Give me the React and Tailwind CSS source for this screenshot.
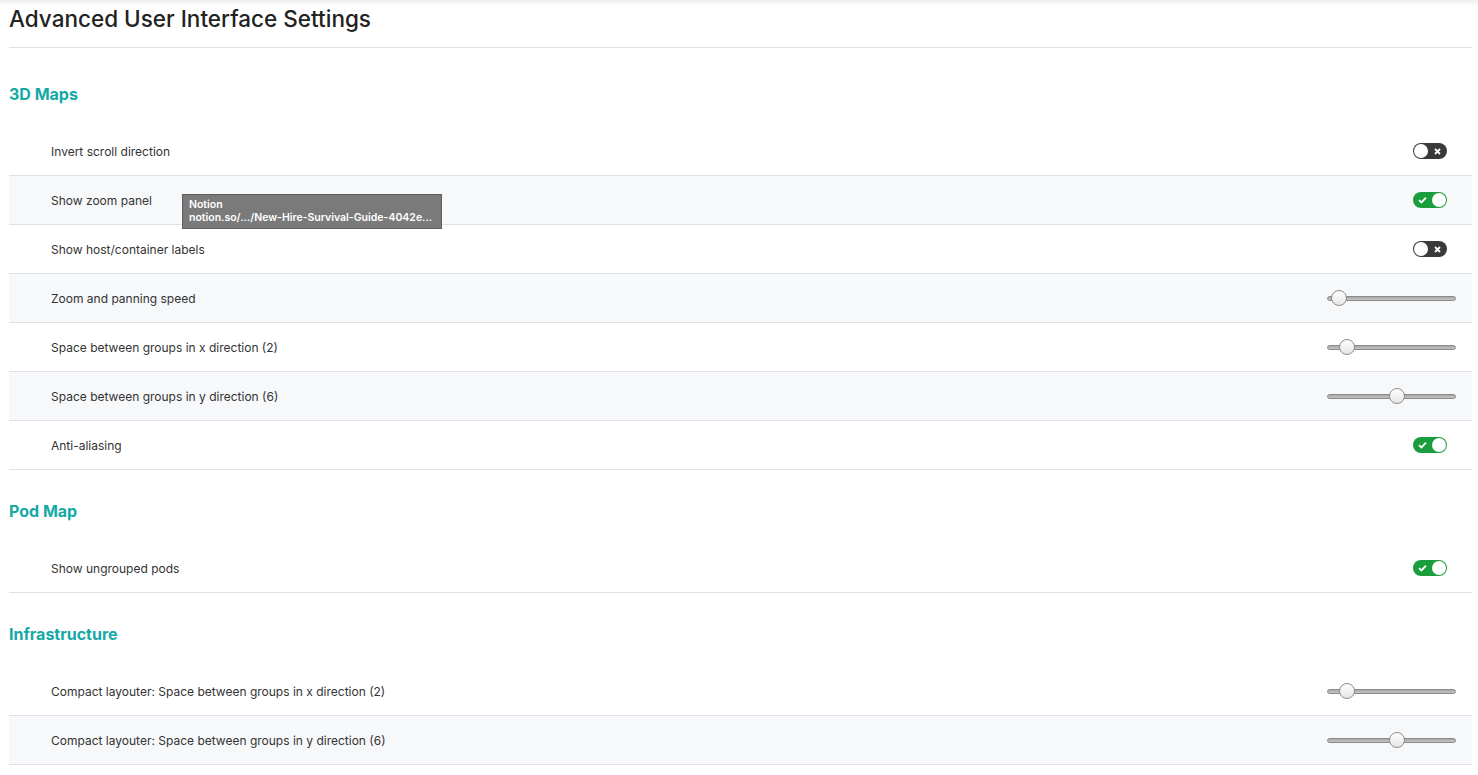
import React from "react";

const sections = [
    {
        title: "3D Maps",
        first: true,
        rows: [
            { label: "Invert scroll direction", type: "toggle", on: false },
            { label: "Show zoom panel", type: "toggle", on: true, tooltip: true },
            { label: "Show host/container labels", type: "toggle", on: false },
            { label: "Zoom and panning speed", type: "slider", value: 12 },
            { label: "Space between groups in x direction (2)", type: "slider", value: 20 },
            { label: "Space between groups in y direction (6)", type: "slider", value: 70 },
            { label: "Anti-aliasing", type: "toggle", on: true },
        ],
    },
    {
        title: "Pod Map",
        rows: [{ label: "Show ungrouped pods", type: "toggle", on: true }],
    },
    {
        title: "Infrastructure",
        rows: [
            { label: "Compact layouter: Space between groups in x direction (2)", type: "slider", value: 20 },
            { label: "Compact layouter: Space between groups in y direction (6)", type: "slider", value: 70 },
        ],
    },
];

function Toggle({ on }) {
    if (on) {
        return (
            <div className="w-[34px] h-[16px] rounded-full bg-[#1a9d3c] flex items-center justify-between pl-[5px] pr-[1px]">
                <svg width="9" height="8" viewBox="0 0 9 8">
                    <path d="M1 4.2 L3.4 6.4 L8 1.6" stroke="white" strokeWidth="1.8" fill="none" />
                </svg>
                <div className="w-[14px] h-[14px] rounded-full bg-white" />
            </div>
        );
    }
    return (
        <div className="w-[34px] h-[16px] rounded-full bg-[#3a3a3a] flex items-center justify-between pl-[1px] pr-[6px]">
            <div className="w-[14px] h-[14px] rounded-full bg-white" />
            <svg width="7" height="7" viewBox="0 0 7 7">
                <path d="M1 1 L6 6 M6 1 L1 6" stroke="white" strokeWidth="1.8" />
            </svg>
        </div>
    );
}

function Slider({ value }) {
    return (
        <div className="relative w-[129px] h-[16px] flex items-center">
            <div className="w-full h-[5px] rounded-full border border-[#8a8a8a] bg-gradient-to-b from-[#a8a8a8] to-[#c4c4c4]" />
            <div
                className="absolute top-0 w-[16px] h-[16px] rounded-full border border-[#8c8c8c] bg-gradient-to-b from-white to-[#e6e6e6]"
                style={{ left: `${value}px`, transform: "translateX(-50%)" }}
            />
        </div>
    );
}

export default function App() {
    return (
        <div className="min-h-screen bg-white font-['Inter',Arial,sans-serif] text-[#333]">
            <div className="h-[6px] bg-gradient-to-b from-[#eeeeee] to-white -mb-[6px]" />
            <div className="pl-[9px] pr-[6px]">
                <h1 className="h-[48px] pt-[5px] text-[22.5px] leading-[28px] font-medium text-[#222] border-b border-[#dde2e8]">
                    Advanced User Interface Settings
                </h1>
                {sections.map((s) => (
                    <div key={s.title}>
                        <h2
                            className={`${s.first ? "h-[79px] pt-[35px]" : "h-[74px] pt-[30px]"} text-[16px] leading-[22px] font-bold text-[#15a9a6]`}
                        >
                            {s.title}
                        </h2>
                        {s.rows.map((r, i) => (
                            <div
                                key={r.label}
                                className={`relative h-[49px] flex items-center justify-between pl-[42px] pr-[17px] border-b border-[#dde2e8] text-[12px] ${i % 2 === 1 ? "bg-[#f7f8fa]" : "bg-white"}`}
                            >
                                <span className="pt-[2px]">{r.label}</span>
                                {r.type === "toggle" ? (
                                    <div className="pr-[8px]">
                                        <Toggle on={r.on} />
                                    </div>
                                ) : (
                                    <div className="mr-[-1px]">
                                        <Slider value={r.value} />
                                    </div>
                                )}
                                {r.tooltip && (
                                    <div className="absolute left-[173px] top-[18px] w-[260px] h-[35px] px-[6px] pt-[3px] bg-[#7a7a7a] border border-[#5f5f5f] text-white text-[10.5px] leading-[13px] font-semibold whitespace-nowrap z-10">
                                        <div>Notion</div>
                                        <div>notion.so/.../New-Hire-Survival-Guide-4042e...</div>
                                    </div>
                                )}
                            </div>
                        ))}
                    </div>
                ))}
            </div>
        </div>
    );
}
